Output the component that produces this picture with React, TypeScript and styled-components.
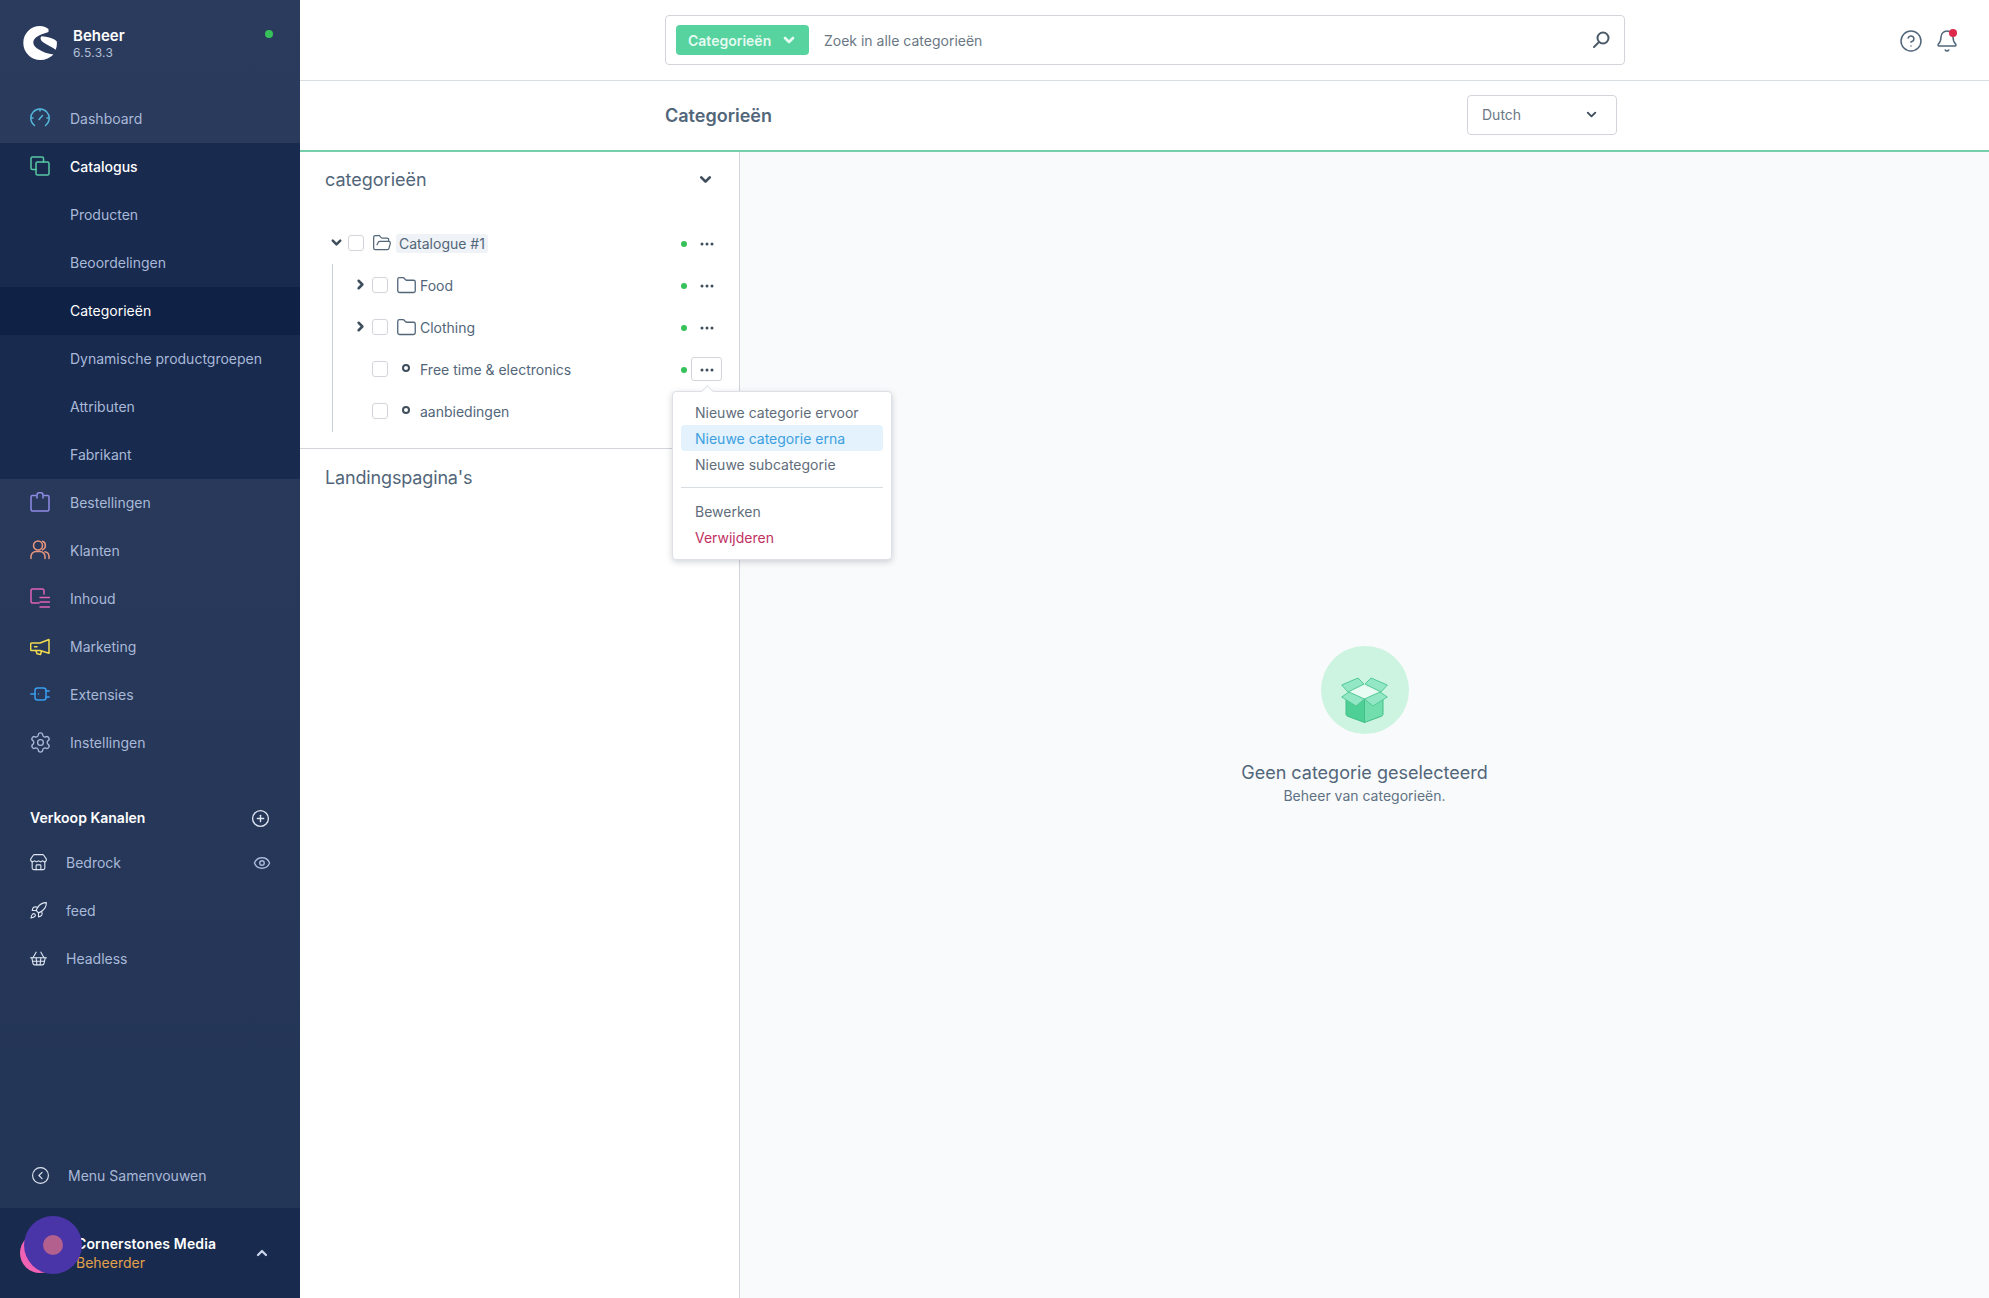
import React from "react";
import styled, { createGlobalStyle } from "styled-components";
import { Settings, Store, Rocket, ShoppingBasket, CirclePlus, Eye, CircleChevronLeft, CircleHelp, Bell, Folder, FolderOpen, ChevronDown, ChevronRight, ChevronUp } from "lucide-react";

const Global = createGlobalStyle`
  html, body { margin: 0; padding: 0; background: #fff; }
  body { font-family: Inter, "Noto Sans", sans-serif; font-size: 14px; color: #52667a; }
  * { box-sizing: border-box; }
`;

const Shell = styled.div`
  display: grid;
  grid-template-columns: 300px 1fr;
  width: 1989px;
  height: 1298px;
  overflow: hidden;
`;

/* ---------- Sidebar ---------- */
const Sidebar = styled.aside`
  display: flex;
  flex-direction: column;
  background: linear-gradient(180deg, #2b3b5d 0%, #233556 100%);
  color: #a9b9d8;
`;
const Brand = styled.div`
  height: 95px;
  display: flex;
  align-items: flex-start;
  padding: 25px 27px 0 23px;
  gap: 16px;
`;
const BrandText = styled.div`
  flex: 1;
  display: flex;
  flex-direction: column;
  padding-top: 1px;
`;
const BrandName = styled.span`
  color: #fff;
  font-size: 15px;
  font-weight: 600;
  line-height: 20px;
`;
const BrandVersion = styled.span`
  font-size: 12px;
  line-height: 14px;
  color: #b3c0d8;
  letter-spacing: 0.3px;
`;
const StatusLed = styled.span`
  width: 8px;
  height: 8px;
  border-radius: 50%;
  background: #37c15a;
  margin-top: 5px;
`;
const NavGroup = styled.div`
  background: #182a4e;
`;
const NavRow = styled.div<{ $active?: boolean; $current?: boolean }>`
  height: 48px;
  display: flex;
  align-items: center;
  gap: 20px;
  padding: 0 0 2px 30px;
  color: ${(p) => (p.$active || p.$current ? "#fff" : "#a9b9d8")};
  font-weight: ${(p) => (p.$active ? 500 : 400)};
  background: ${(p) => (p.$current ? "#0f2144" : "transparent")};
`;
const SubRow = styled(NavRow)`
  padding-left: 70px;
`;
const NavIcon = styled.svg<{ $color: string }>`
  width: 20px;
  height: 20px;
  flex: none;
  fill: none;
  stroke: ${(p) => p.$color};
  stroke-width: 1.5;
  stroke-linecap: round;
  stroke-linejoin: round;
`;
const GearIcon = styled(Settings)`
  flex: none;
  margin: 0 -1.5px;
  color: #a9b9d8;
`;
const ChannelHead = styled.div`
  margin-top: 30px;
  height: 42px;
  display: flex;
  align-items: center;
  justify-content: space-between;
  padding: 0 30px 2px 30px;
  color: #fff;
  font-weight: 600;
`;
const AddChannel = styled(CirclePlus)`
  color: #dfe6f2;
  margin-top: 2px;
`;
const ChannelRow = styled.div`
  height: 48px;
  display: flex;
  align-items: center;
  gap: 20px;
  padding: 0 29px 1px 30px;
  svg:first-child { color: #dfe6f2; flex: none; margin: 0 -1.5px; }
`;
const ChannelName = styled.span`
  flex: 1;
`;
const Collapse = styled.div`
  margin-top: auto;
  height: 66px;
  display: flex;
  align-items: center;
  gap: 20px;
  padding-left: 32px;
  svg { flex: none; margin: 0 -1.5px; }
`;
const UserFooter = styled.div`
  position: relative;
  height: 90px;
  background: #182a4e;
  display: flex;
  align-items: center;
  padding: 0 30px 0 76px;
`;
const UserText = styled.div`
  flex: 1;
  display: flex;
  flex-direction: column;
  margin-top: -1px;
`;
const UserName = styled.span`
  color: #fff;
  font-weight: 600;
  line-height: 19px;
  letter-spacing: 0.14px;
`;
const UserRole = styled.span`
  color: #e3a14c;
  line-height: 19px;
`;
const AvatarBack = styled.span`
  position: absolute;
  left: 20px;
  top: 25px;
  width: 40px;
  height: 40px;
  border-radius: 50%;
  background: #f062b4;
`;
const AvatarFront = styled.span`
  position: absolute;
  left: 24px;
  top: 8px;
  width: 58px;
  height: 58px;
  border-radius: 50%;
  background: #4a35a8;
  display: flex;
  align-items: center;
  justify-content: center;
  &::after {
    content: "";
    width: 20px;
    height: 20px;
    border-radius: 50%;
    background: #b3608f;
  }
`;

/* ---------- Main ---------- */
const Main = styled.main`
  display: flex;
  flex-direction: column;
  min-width: 0;
`;
const TopBar = styled.header`
  height: 81px;
  flex: none;
  border-bottom: 1px solid #d8dde2;
  display: flex;
  align-items: flex-start;
  padding: 15px 30px 0 365px;
`;
const SearchBox = styled.div`
  width: 960px;
  height: 50px;
  border: 1px solid #d1d5da;
  border-radius: 4px;
  display: flex;
  align-items: center;
  padding: 0 14px 0 10px;
  gap: 15px;
`;
const TypeButton = styled.div`
  width: 133px;
  height: 30px;
  border-radius: 4px;
  background: #56d39f;
  color: #e5faf1;
  font-weight: 600;
  display: flex;
  align-items: center;
  justify-content: space-between;
  padding: 0 12px 0 12px;
`;
const SearchHint = styled.span`
  flex: 1;
  color: #6b7884;
`;
const TopIcons = styled.div`
  margin-left: auto;
  display: flex;
  align-items: center;
  gap: 12px;
  margin-top: 14px;
  color: #52667a;
`;
const BellWrap = styled.span`
  position: relative;
  display: flex;
  &::after {
    content: "";
    position: absolute;
    top: 0;
    right: 2px;
    width: 8px;
    height: 8px;
    border-radius: 50%;
    background: #de294c;
  }
`;
const SmartBar = styled.div`
  height: 71px;
  flex: none;
  border-bottom: 2px solid #75cfaa;
  display: flex;
  align-items: center;
  justify-content: space-between;
  padding: 0 372px 0 365px;
`;
const PageTitle = styled.h1`
  margin: 0;
  font-size: 18px;
  font-weight: 600;
  color: #52667a;
`;
const LangSelect = styled.div`
  width: 150px;
  height: 40px;
  margin-top: -2px;
  border: 1px solid #d1d5da;
  border-radius: 4px;
  display: flex;
  align-items: center;
  justify-content: space-between;
  padding: 0 17px 0 14px;
  color: #6b7884;
`;
const Content = styled.div`
  flex: 1;
  display: grid;
  grid-template-columns: 440px 1fr;
  min-height: 0;
`;
const TreePane = styled.section`
  border-right: 1px solid #d1d5da;
  background: #fff;
`;
const PaneHead = styled.div`
  height: 56px;
  display: flex;
  align-items: center;
  justify-content: space-between;
  padding: 0 25px 1px 25px;
  font-size: 18px;
  color: #52667a;
`;
const LandingHead = styled(PaneHead)`
  height: 58px;
  letter-spacing: -0.15px;
`;
const Tree = styled.div`
  padding: 14px 0 16px;
  border-bottom: 1px solid #d1d5da;
`;
const Children = styled.div`
  margin-left: 32px;
  border-left: 1px solid #c8ced6;
`;
const Row = styled.div<{ $inset: number }>`
  height: 42px;
  display: flex;
  align-items: center;
  padding: 0 17px 0 ${(p) => p.$inset}px;
`;
const Toggle = styled.span`
  width: 20px;
  height: 16px;
  flex: none;
  display: flex;
  align-items: center;
  justify-content: center;
  padding-right: 4px;
  color: #3f4e5c;
  margin-top: -2px;
`;
const Check = styled.span`
  width: 16px;
  height: 16px;
  flex: none;
  border: 1px solid #d1d5da;
  border-radius: 3px;
  margin-right: 10px;
  background: #fff;
`;
const NodeIcon = styled.span`
  width: 16px;
  height: 16px;
  flex: none;
  display: flex;
  align-items: center;
  justify-content: center;
  color: #52667a;
  svg { flex: none; }
`;
const LeafDot = styled.span`
  width: 8px;
  height: 8px;
  margin: -2px 0 0 -1px;
  border: 2px solid #3f4e5c;
  border-radius: 50%;
`;
const Label = styled.span<{ $selected?: boolean }>`
  margin-left: 6px;
  flex: 1;
  color: #52667a;
  span {
    display: inline-block;
    line-height: 19px;
    border-radius: 3px;
    padding: ${(p) => (p.$selected ? "0 3px" : "0")};
    background: ${(p) => (p.$selected ? "#eff2f6" : "transparent")};
  }
`;
const Active = styled.span`
  width: 6px;
  height: 6px;
  border-radius: 50%;
  background: #37c15a;
  flex: none;
  margin: 2px 4px 0 0;
`;
const MenuAnchor = styled.div`
  position: relative;
  flex: none;
`;
const DotsButton = styled.button<{ $open?: boolean }>`
  width: 31px;
  height: 24px;
  padding: 2px 0 0;
  background: #fff;
  border: 1px solid ${(p) => (p.$open ? "#d1d5da" : "transparent")};
  border-radius: 3px;
  display: flex;
  align-items: center;
  justify-content: center;
  color: #3f4e5c;
`;
const Popover = styled.div`
  position: absolute;
  top: 34px;
  left: -19px;
  width: 220px;
  z-index: 5;
  background: #fff;
  border: 1px solid #dde1e5;
  border-radius: 4px;
  box-shadow: 0 2px 6px rgba(40, 55, 75, 0.22);
  padding: 7px 0 9px;
  &::before {
    content: "";
    position: absolute;
    top: -5px;
    left: 30px;
    width: 8px;
    height: 8px;
    background: #fff;
    border-left: 1px solid #dde1e5;
    border-top: 1px solid #dde1e5;
    transform: rotate(45deg);
  }
`;
const MenuItem = styled.div<{ $tone?: "hover" | "danger" }>`
  height: 26px;
  margin: 0 8px;
  padding: 0 14px;
  display: flex;
  align-items: center;
  border-radius: 4px;
  color: ${(p) => (p.$tone === "hover" ? "#3d9fe0" : p.$tone === "danger" ? "#c0315f" : "#5f6d7a")};
  background: ${(p) => (p.$tone === "hover" ? "#e3f2fc" : "transparent")};
`;
const MenuDivider = styled.div`
  height: 1px;
  background: #d8dde2;
  margin: 10px 8px;
`;
const EmptyPane = styled.section`
  background: #f9fafb;
  display: flex;
  flex-direction: column;
  align-items: center;
  padding-top: 494px;
`;
const EmptyCircle = styled.div`
  width: 88px;
  height: 88px;
  padding-top: 20px;
  border-radius: 50%;
  background: #ccf4e1;
  display: flex;
  align-items: center;
  justify-content: center;
`;
const EmptyTitle = styled.div`
  margin-top: 27px;
  font-size: 18px;
  line-height: 24px;
  color: #52667a;
`;
const EmptyText = styled.div`
  font-size: 14px;
  line-height: 22px;
  color: #5f7285;
`;

/* ---------- Drawings ---------- */
const Logo = () => (
  <svg width="34" height="35" viewBox="0 0 34 35" style={{ flex: "none" }}>
    <path fill="#fff" d="M25.500 4C23 2 20 1 17 1 7.600 1 .3 8.500 .3 18c0 9.500 7.700 17 17.200 17 5 0 9.500-2 13-5.500-5.500-.5-11-2.500-15.500-5.500-3-2-4.700-4-4.700-6.500 0-4.500 4.700-7.500 15.200-10.500Z" />
    <path fill="#fff" d="M18.700 11.300c5.300.2 12.300 2.200 15 5 .5 2.700.1 5.700-1 8.400-3.700-2.700-8.700-4.700-12.200-7.200-3-2-4-5-1.800-6.200Z" />
  </svg>
);
const SearchGlyph = () => (
  <svg width="18" height="18" viewBox="0 0 18 18" fill="none" stroke="#4a5a68" strokeWidth="2" strokeLinecap="round" style={{ flex: "none" }}>
    <circle cx="11" cy="7" r="5.500" />
    <path d="M7 11 2 16" />
  </svg>
);
const GaugeIcon = () => (
  <NavIcon $color="#53b4d8" viewBox="0 0 20 20">
    <path d="M4.500 17.500A9.200 9.200 0 1 1 15.500 17.500" />
    <path d="M10 1v2M1.500 10h1.500M17 10h1.500M9 11.500l3.500-4" />
  </NavIcon>
);
const StackIcon = () => (
  <NavIcon $color="#57c9a4" viewBox="0 0 20 20">
    <path d="M6 13.500H2.500a1.500 1.500 0 0 1-1.500-1.500V2.500A1.500 1.500 0 0 1 2.500 1H12a1.500 1.500 0 0 1 1.500 1.500V6" />
    <rect x="6" y="6" width="13" height="13" rx="1.500" />
  </NavIcon>
);
const BagIcon = () => (
  <NavIcon $color="#8f8ce8" viewBox="0 0 20 20">
    <path d="M6 3.500H2.500A1.500 1.500 0 0 0 1 5v12.500A1.500 1.500 0 0 0 2.500 19h15a1.500 1.500 0 0 0 1.500-1.500V5a1.500 1.500 0 0 0-1.500-1.500H14" />
    <path d="M7 6V3a3 2.500 0 0 1 6 0v3" />
  </NavIcon>
);
const PeopleIcon = () => (
  <NavIcon $color="#e8957f" viewBox="0 0 20 20">
    <circle cx="8" cy="5.500" r="4.500" />
    <path d="M1 18.500v-2a5 5 0 0 1 5-5h4a5 5 0 0 1 5 5v2" />
    <path d="M12.500 1.300a4.500 4.500 0 0 1 0 8.400M15 11.800a5 5 0 0 1 4 4.800v1.900" />
  </NavIcon>
);
const ContentIcon = () => (
  <NavIcon $color="#e062ba" viewBox="0 0 20 20">
    <path d="M9 15H2.500A1.500 1.500 0 0 1 1 13.500v-11A1.500 1.500 0 0 1 2.500 1h10A1.500 1.500 0 0 1 14 2.500V6" />
    <path d="M10 9.500h9.500M10 14h9.500M10 19h9.500" />
  </NavIcon>
);
const MegaphoneIcon = () => (
  <NavIcon $color="#f1dc4e" viewBox="0 0 20 20">
    <path d="M1.500 7h8.500L19 3.500v13.800L10 14.500H1.500a.8.8 0 0 1-.8-.8V7.800A.8.800 0 0 1 1.500 7Z" />
    <path d="M6 14.500l1 3.200 3.500 .8 1-3.200M4.500 10.700H7" />
  </NavIcon>
);
const PlugIcon = () => (
  <NavIcon $color="#3a9df0" viewBox="0 0 20 20">
    <rect x="5" y="4" width="11" height="12" rx="2.500" />
    <path d="M.8 10H5M16 7h3.200M16 13h3.200M8.500 10h.01" />
  </NavIcon>
);
const Dots = () => (
  <svg width="14" height="4" viewBox="0 0 14 4" fill="currentColor">
    <circle cx="2" cy="2" r="1.500" />
    <circle cx="7" cy="2" r="1.500" />
    <circle cx="12" cy="2" r="1.500" />
  </svg>
);
const BoxArt = () => (
  <svg width="48" height="46" viewBox="0 0 48 46" strokeLinejoin="round">
    <path d="M5 22v15c0 1 .5 1.700 1.500 2.200L23.500 45.500V22Z" fill="#4ecf95" stroke="#41bf87" />
    <path d="M42 22v15c0 1-.5 1.700-1.500 2.200L23.500 45.500V22Z" fill="#72ddad" stroke="#41bf87" />
    <path d="M7 15 23.500 8 40 15 23.500 22Z" fill="#e9fcf4" />
    <path d="M.7 8 17 1l6 6L7 15Z" fill="#93e7c4" stroke="#52c995" />
    <path d="M46.300 8 30 1l-6 6 16 8Z" fill="#93e7c4" stroke="#52c995" />
    <path d="M.7 20 8 15l15.500 7L15 29Z" fill="#93e7c4" stroke="#52c995" />
    <path d="M46.300 20 39 15l-15.500 7L32 29Z" fill="#93e7c4" stroke="#52c995" />
  </svg>
);

const mainNavTop = [{ label: "Dashboard", icon: <GaugeIcon /> }];
const subNav = ["Producten", "Beoordelingen", "Categorieën", "Dynamische productgroepen", "Attributen", "Fabrikant"];
const mainNavBottom = [
  { label: "Bestellingen", icon: <BagIcon /> },
  { label: "Klanten", icon: <PeopleIcon /> },
  { label: "Inhoud", icon: <ContentIcon /> },
  { label: "Marketing", icon: <MegaphoneIcon /> },
  { label: "Extensies", icon: <PlugIcon /> },
  { label: "Instellingen", icon: <GearIcon size={23} strokeWidth={1.4} /> },
];

type NodeProps = { name: string; kind: "folder" | "leaf"; open?: boolean; bare?: boolean };

const ChildRow = ({ name, kind, open, bare }: NodeProps) => (
  <Row $inset={19}>
    <Toggle>{kind === "folder" && <ChevronRight size={15} strokeWidth={4} />}</Toggle>
    <Check />
    <NodeIcon>{kind === "folder" ? <Folder size={21} strokeWidth={1.5} /> : <LeafDot />}</NodeIcon>
    <Label><span>{name}</span></Label>
    {!bare && <Active />}
    {!bare && (
      <MenuAnchor>
        <DotsButton $open={open}><Dots /></DotsButton>
        {open && (
          <Popover>
            <MenuItem>Nieuwe categorie ervoor</MenuItem>
            <MenuItem $tone="hover">Nieuwe categorie erna</MenuItem>
            <MenuItem>Nieuwe subcategorie</MenuItem>
            <MenuDivider />
            <MenuItem>Bewerken</MenuItem>
            <MenuItem $tone="danger">Verwijderen</MenuItem>
          </Popover>
        )}
      </MenuAnchor>
    )}
  </Row>
);

export default function App() {
  return (
    <Shell>
      <Global />
      <Sidebar>
        <Brand>
          <Logo />
          <BrandText>
            <BrandName>Beheer</BrandName>
            <BrandVersion>6.5.3.3</BrandVersion>
          </BrandText>
          <StatusLed />
        </Brand>
        {mainNavTop.map((n) => (
          <NavRow key={n.label}>{n.icon}<span>{n.label}</span></NavRow>
        ))}
        <NavGroup>
          <NavRow $active><StackIcon /><span>Catalogus</span></NavRow>
          {subNav.map((s) => (
            <SubRow key={s} $current={s === "Categorieën"}>{s}</SubRow>
          ))}
        </NavGroup>
        {mainNavBottom.map((n) => (
          <NavRow key={n.label}>{n.icon}<span>{n.label}</span></NavRow>
        ))}
        <ChannelHead>
          <span>Verkoop Kanalen</span>
          <AddChannel size={19} strokeWidth={1.7} />
        </ChannelHead>
        <ChannelRow>
          <Store size={19} strokeWidth={1.4} />
          <ChannelName>Bedrock</ChannelName>
          <Eye size={18} strokeWidth={1.9} color="#a9b9d8" />
        </ChannelRow>
        <ChannelRow>
          <Rocket size={19} strokeWidth={1.4} />
          <ChannelName>feed</ChannelName>
        </ChannelRow>
        <ChannelRow>
          <ShoppingBasket size={19} strokeWidth={1.4} />
          <ChannelName>Headless</ChannelName>
        </ChannelRow>
        <Collapse>
          <CircleChevronLeft size={19} strokeWidth={1.4} color="#dfe6f2" />
          <span>Menu Samenvouwen</span>
        </Collapse>
        <UserFooter>
          <AvatarBack />
          <AvatarFront />
          <UserText>
            <UserName>Cornerstones Media</UserName>
            <UserRole>Beheerder</UserRole>
          </UserText>
          <ChevronUp size={16} strokeWidth={3.4} color="#c9d5ea" />
        </UserFooter>
      </Sidebar>
      <Main>
        <TopBar>
          <SearchBox>
            <TypeButton>
              <span>Categorieën</span>
              <ChevronDown size={16} strokeWidth={4} />
            </TypeButton>
            <SearchHint>Zoek in alle categorieën</SearchHint>
            <SearchGlyph />
          </SearchBox>
          <TopIcons>
            <CircleHelp size={24} strokeWidth={1.5} />
            <BellWrap><Bell size={24} strokeWidth={1.5} /></BellWrap>
          </TopIcons>
        </TopBar>
        <SmartBar>
          <PageTitle>Categorieën</PageTitle>
          <LangSelect>
            <span>Dutch</span>
            <ChevronDown size={15} strokeWidth={3} color="#3f4e5c" />
          </LangSelect>
        </SmartBar>
        <Content>
          <TreePane>
            <PaneHead>
              <span>categorieën</span>
              <ChevronDown size={17} strokeWidth={3.8} color="#3f4e5c" />
            </PaneHead>
            <Tree>
              <Row $inset={28}>
                <Toggle><ChevronDown size={15} strokeWidth={4} /></Toggle>
                <Check />
                <NodeIcon><FolderOpen size={20} strokeWidth={1.5} /></NodeIcon>
                <Label $selected><span>Catalogue #1</span></Label>
                <Active />
                <MenuAnchor><DotsButton><Dots /></DotsButton></MenuAnchor>
              </Row>
              <Children>
                <ChildRow name="Food" kind="folder" />
                <ChildRow name="Clothing" kind="folder" />
                <ChildRow name="Free time & electronics" kind="leaf" open />
                <ChildRow name="aanbiedingen" kind="leaf" bare />
              </Children>
            </Tree>
            <LandingHead>
              <span>Landingspagina's</span>
            </LandingHead>
          </TreePane>
          <EmptyPane>
            <EmptyCircle><BoxArt /></EmptyCircle>
            <EmptyTitle>Geen categorie geselecteerd</EmptyTitle>
            <EmptyText>Beheer van categorieën.</EmptyText>
          </EmptyPane>
        </Content>
      </Main>
    </Shell>
  );
}
